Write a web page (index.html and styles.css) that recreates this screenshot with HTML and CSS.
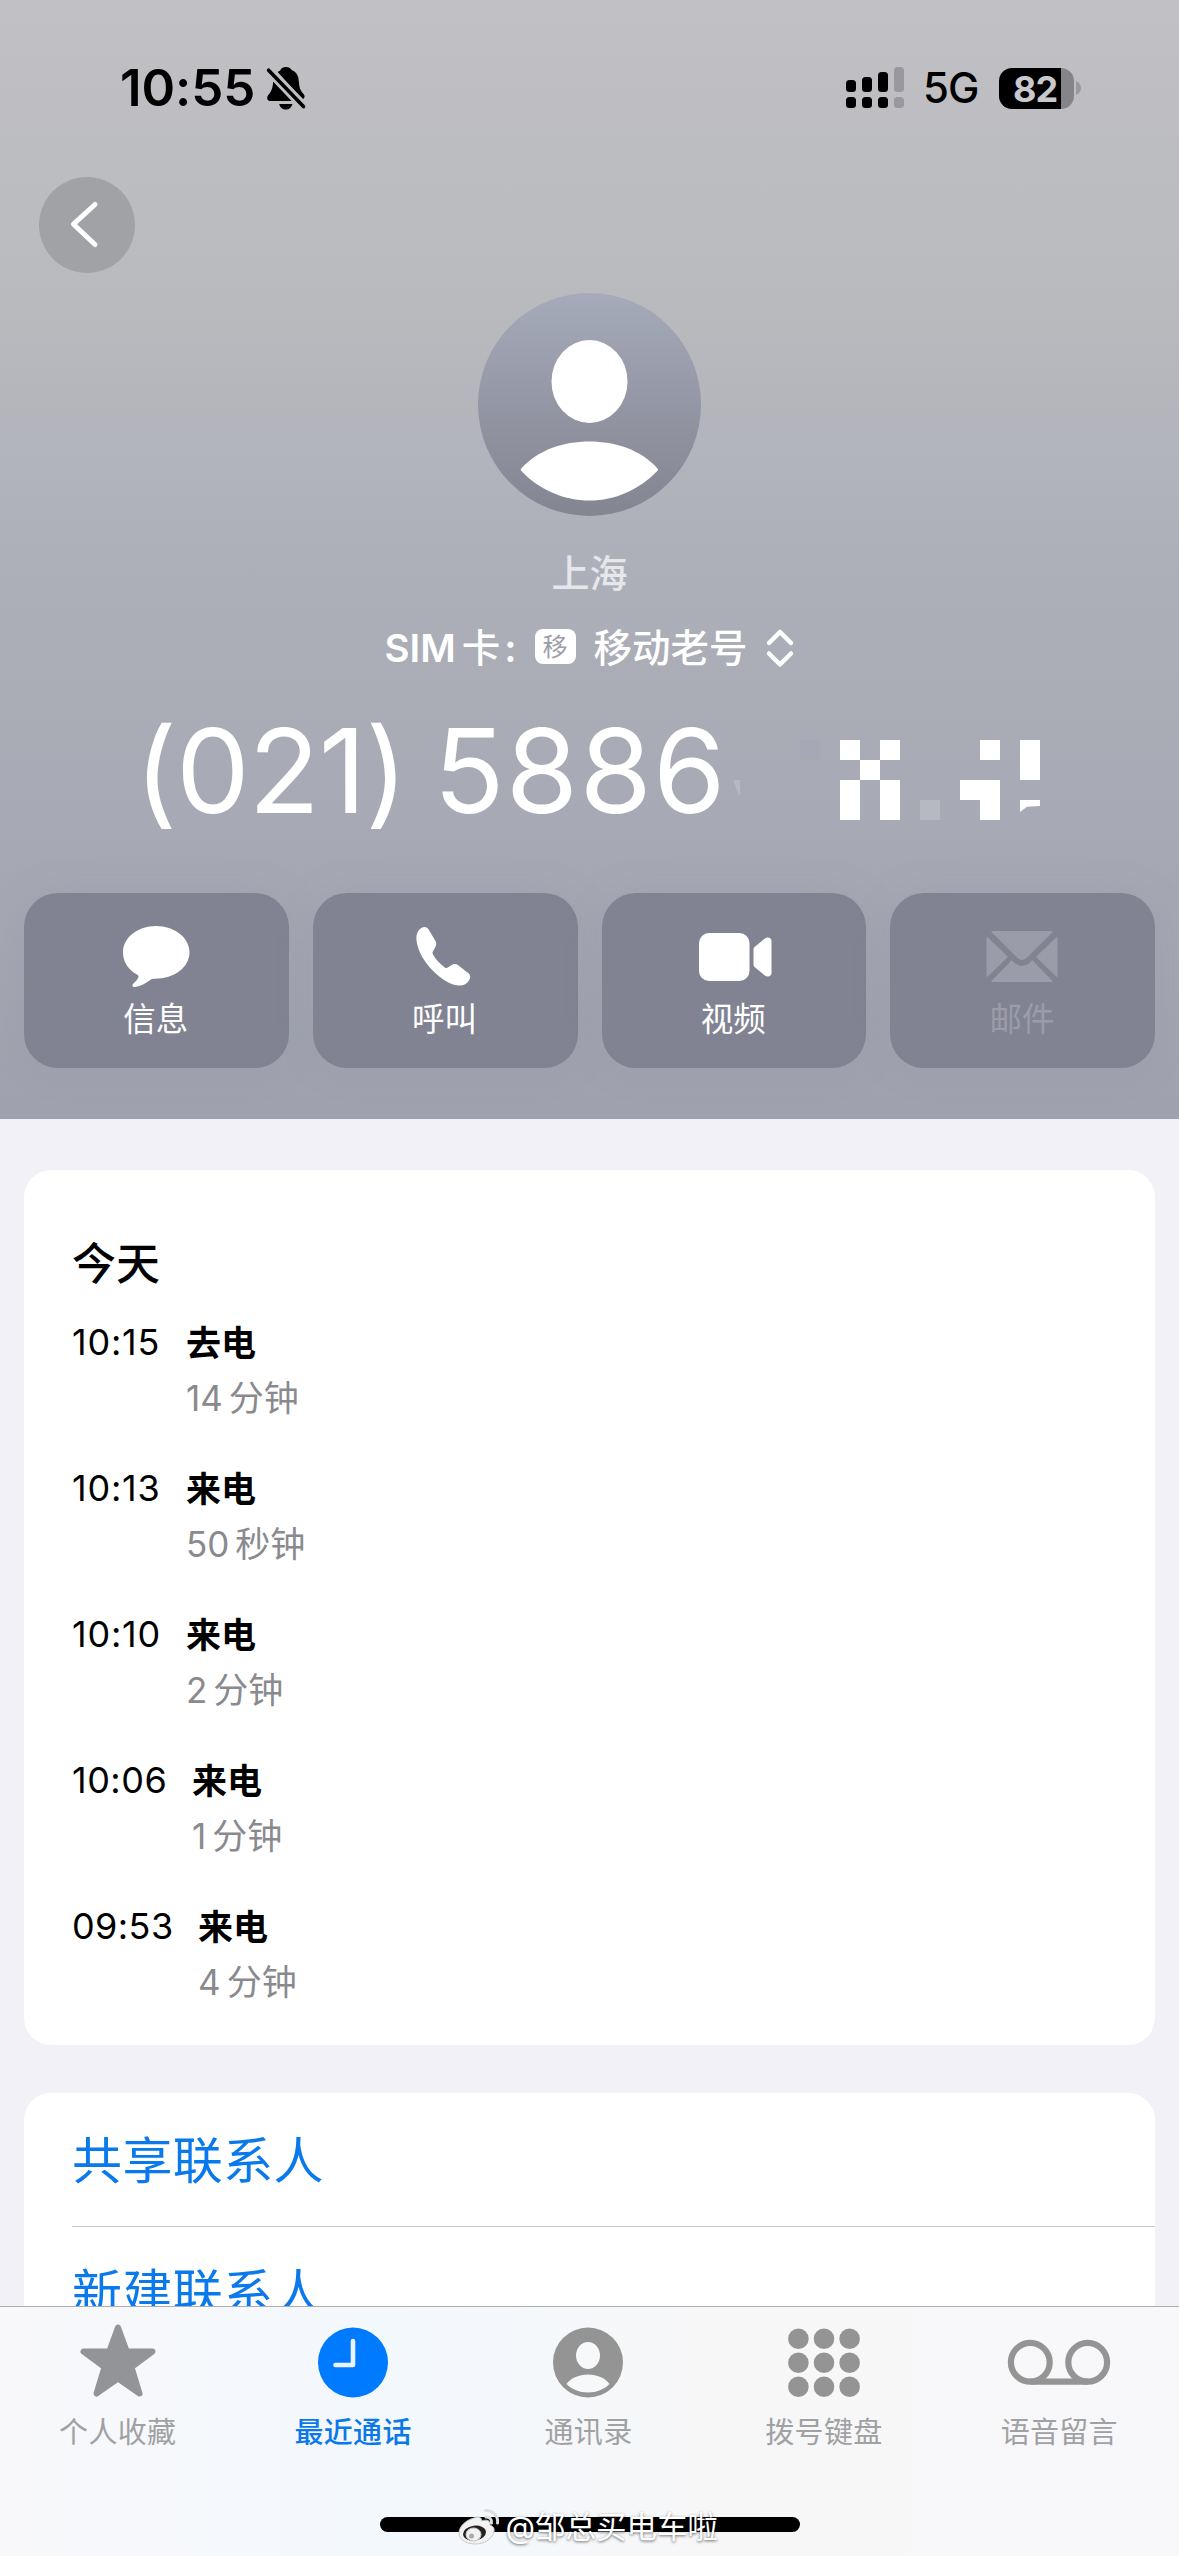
FILE: index.html
```
<!DOCTYPE html>
<html lang="zh-CN">
<head>
<meta charset="utf-8">
<title>通话详情</title>
<link rel="stylesheet" href="styles.css">
</head>
<body>
<div class="phone">
  <header class="hero">
    <div class="status">
      <div class="status-left">
        <span class="clock">10:55</span>
        <svg class="bell" viewBox="0 0 40 44" width="40" height="44">
          <path d="M20 1c-3.300 0-5 1.600-5.800 3.400L11.600 6l24.800 27.600c1.700-1 2.600-2.600 2-4.200-.8-2.300-5-4-5.400-12.400C32.600 9 30 5.600 25.800 4.300 25 2.300 23 1 20 1z"/>
          <path d="M7.200 15.500 25.600 35H4.200C1.600 35 .6 32.400 1.600 30.200c1.200-2.600 5-4.200 5.600-14.700z"/>
          <path d="M13.200 38h13.200c-.8 3.400-3.200 5.600-6.600 5.600s-5.800-2.200-6.600-5.600z"/>
          <path class="slash-gap" d="M3 4.500 38 40.500"/>
          <path class="slash" d="M2.600 4.200 37.500 40.600"/>
        </svg>
      </div>
      <div class="status-right">
        <svg class="signal" viewBox="0 0 58 42" width="58" height="42">
          <rect x="0" y="13" width="10" height="12" rx="3.500"/><rect x="16" y="10" width="10" height="15" rx="3.500"/><rect x="32" y="5" width="10" height="20" rx="3.500"/>
          <rect x="0" y="30" width="10" height="11" rx="3.500"/><rect x="16" y="30" width="10" height="11" rx="3.500"/><rect x="32" y="30" width="10" height="11" rx="3.500"/>
          <g class="dim"><rect x="48" y="0" width="10" height="25" rx="3.500"/><rect x="48" y="30" width="10" height="11" rx="3.500"/></g>
        </svg>
        <span class="network">5G</span>
        <div class="battery"><span class="level">82</span></div>
        <svg class="nub" viewBox="0 0 5 14" width="5" height="14"><path d="M0 0c3 1.500 5 4 5 7s-2 5.500-5 7z"/></svg>
      </div>
    </div>
    <div class="nav">
      <div class="back"><svg viewBox="0 0 96 96" width="96" height="96"><path d="M56 27.500 34.500 47.200 56 67.500"/></svg></div>
    </div>
    <svg class="avatar" viewBox="0 0 223 223" width="223" height="223">
      <defs><linearGradient id="av" x1="0" y1="0" x2="0" y2="1"><stop offset="0" stop-color="#a5abba"/><stop offset=".6" stop-color="#9092a0"/><stop offset="1" stop-color="#838691"/></linearGradient></defs>
      <circle cx="111.500" cy="111.500" r="111.500" fill="url(#av)"/>
      <ellipse cx="111.500" cy="88.500" rx="38" ry="41.500" fill="#fff"/>
      <path d="M43 177.500c-.5-.6-.4-1.200 0-1.800C60 157 85 148.500 111.500 148.500S163 157 179.700 175.700c.5.600.5 1.200 0 1.800C161 197 137 207.500 111.500 207.500S61 197 43 177.500z" fill="#fff"/>
    </svg>
    <div class="place">上海</div>
    <div class="sim">
      <span class="sim-label"><span>SIM</span><span>卡</span><span class="colon">:</span></span><span class="sim-badge">移</span><span class="sim-name">移动老号</span>
      <svg class="picker" viewBox="0 0 28 40" width="28" height="40"><path d="M3 15 14 4l11 11M3 25.500l11 11 11-11"/></svg>
    </div>
    <div class="number">
      <span class="area">(021)</span><span class="digits">5886</span>
      <svg class="mosaic" viewBox="0 0 310 84" width="310" height="84">
        <path class="faint" d="M4 44h6v16c-3-5-5-9-6-16z"/>
        <path class="ghost" d="M70 4h20v20H70z"/>
        <path class="faint" d="M190 64h20v20h-20z"/>
        <path d="M110 4h20v20h-20zM150 4h20v20h-20zM130 24h20v20h-20zM110 44h20v40h-20zM150 44h20v40h-20zM250 4h20v20h-20zM230 44h40v40h-20V64h-20zM290 4h20v40h-20zM290 64h20v6l-13 .7-7 5.300z"/>
      </svg>
    </div>
    <div class="actions">
      <div class="action">
        <svg viewBox="0 0 72 62" width="72" height="62"><path d="M36 1C17.600 1 3 12.800 3 27.300c0 10 5.500 17.600 14 22.300 1.900 1 2 2.200.9 3.900-1.200 1.900-2.900 3.600-4.500 5.100-2 1.900-1 3.900 2.100 3.400 5.200-.8 10.300-3.900 14-6.600 1.800-1.300 3.300-1.600 5.400-1.600C54.700 53.800 69.500 42 69.500 27.300S54.500 1 36 1z"/></svg>
        <span>信息</span>
      </div>
      <div class="action">
        <svg viewBox="0 0 72 62" width="72" height="62"><path d="M11.500 6C14.300 3.500 17.700 3 20 6.300l6.700 11.200c1.500 2.500 1.300 4.600-.2 7.200l-1.900 3.400c-.8 1.400-.8 2.100 0 3.600 3 5 7.200 9.400 11.700 12.700 1.200.8 2.100.7 3.300-.1l3.200-2.100c2.600-1.800 4.600-1.700 6.900 0l10.200 8c2.400 1.800 2.400 4.500.6 7.300-2.400 3.700-5.900 5.500-10.700 5-8.600-.8-17.700-6.700-25.900-15.200S9.500 28.300 8.200 18.800C7.500 13.500 8.200 9 11.500 6z" transform="translate(-.5 -2)"/></svg>
        <span>呼叫</span>
      </div>
      <div class="action">
        <svg viewBox="-2 0 72 62" width="72" height="62"><rect x="0" y="8" width="50.500" height="48" rx="10"/><path d="M54.500 24.500c0-1 .3-1.700 1-2.400l10-8.300c3-2.500 7-1.200 7 2.200v32c0 3.400-4 4.700-7 2.200l-10-8.300c-.7-.7-1-1.400-1-2.400z"/></svg>
        <span>视频</span>
      </div>
      <div class="action disabled">
        <svg viewBox="0 0 72 62" width="72" height="62"><path d="M5 6.500C6.200 6 7.500 6 9 6h54c1.500 0 2.800 0 4 .5L41.500 32c-4 4-7 4-11 0zM1 11.800l21 20L1 52.300C.6 51 .5 50 .5 48.500v-33c0-1.500.1-2.500.5-3.700zM71 11.800l-21 20 21 20.500c.4-1.300.5-2.300.5-3.800v-33c0-1.500-.1-2.500-.5-3.700zM5 56.500l20.700-21.200 2.300 2.200c5 4.300 11 4.300 16 0l2.300-2.200L67 56.500c-1.200.4-2.500.5-4 .5H9c-1.500 0-2.800-.1-4-.5z"/></svg>
        <span>邮件</span>
      </div>
    </div>
  </header>
  <main class="content">
    <section class="card history">
      <h2>今天</h2>
      <div class="call"><span class="time t-a">10:15</span><div><b>去电</b><p>14<i></i>分钟</p></div></div>
      <div class="call"><span class="time t-a">10:13</span><div><b>来电</b><p>50<i></i>秒钟</p></div></div>
      <div class="call"><span class="time t-a">10:10</span><div><b>来电</b><p>2<i></i>分钟</p></div></div>
      <div class="call"><span class="time t-b">10:06</span><div><b>来电</b><p>1<i></i>分钟</p></div></div>
      <div class="call"><span class="time t-c">09:53</span><div><b>来电</b><p>4<i></i>分钟</p></div></div>
    </section>
    <section class="card links">
      <div class="link">共享联系人</div>
      <div class="link">新建联系人</div>
    </section>
  </main>
  <nav class="tabs">
    <div class="tab-row">
      <div class="tab">
        <svg viewBox="0 0 80 76" width="80" height="76"><path d="M40 5.500 48.800 29.500H74.500L53.500 45 61.500 71.500 40 56.500 18.500 71.500 26.500 45 5.500 29.500H31.200z" stroke="#929497" stroke-width="6" stroke-linejoin="round" fill="#929497"/></svg>
        <span>个人收藏</span>
      </div>
      <div class="tab active">
        <svg viewBox="0 0 80 76" width="80" height="76"><circle cx="40" cy="40.500" r="35"/><path d="M40 19v24H22.500" fill="none" stroke="#e9f4ff" stroke-width="4.600" stroke-linecap="round" stroke-linejoin="round"/></svg>
        <span>最近通话</span>
      </div>
      <div class="tab">
        <svg viewBox="0 0 80 76" width="80" height="76"><circle cx="40" cy="40.500" r="35"/><ellipse cx="40" cy="33.500" rx="12" ry="13.500" fill="#f7f8f9"/><path d="M18.500 62C23 56 31 52.500 40 52.500S57 56 61.500 62C56 67.500 48.500 70.500 40 70.500S24 67.500 18.500 62z" fill="#f7f8f9"/></svg>
        <span>通讯录</span>
      </div>
      <div class="tab">
        <svg viewBox="0 0 80 76" width="80" height="76"><g id="r"><circle cx="14.400" cy="16.700" r="10.300"/><circle cx="40" cy="16.700" r="10.300"/><circle cx="65.600" cy="16.700" r="10.300"/></g><use href="#r" y="24"/><use href="#r" y="48"/></svg>
        <span>拨号键盘</span>
      </div>
      <div class="tab">
        <svg viewBox="0 0 104 76" width="104" height="76"><g fill="none" stroke="#949494" stroke-width="6.200"><circle cx="23.300" cy="40.300" r="19.400"/><circle cx="80.700" cy="40.300" r="19.400"/><path d="M23.300 59.700h57.400"/></g></svg>
        <span>语音留言</span>
      </div>
    </div>
    <div class="home-indicator">
      <div class="watermark">
        <svg viewBox="0 0 44 38" width="44" height="38">
          <path class="wb" d="M17 10c4-2 8-1 7.500 3 5-2 9.500-.5 8.500 4 4 1.500 5 4.500 3.500 8C34 31.500 27 36 18.500 36 9 36 2 31.500 2 25S9 12 17 10z"/>
          <ellipse class="wk" cx="17.500" cy="25" rx="11.500" ry="7.500" transform="rotate(-8 18 25)"/>
          <ellipse class="wb" cx="16.500" cy="26.500" rx="7.500" ry="6.500"/>
          <circle class="wg" cx="14.500" cy="28" r="2.500"/>
          <path class="wl" d="M28.500 2.500c7.500-.5 13 5.500 12 12.500M29 9c4 0 6 2.500 5.500 6"/>
        </svg>
        <span>@邹总买电车啦</span>
      </div>
    </div>
  </nav>
</div>
</body>
</html>
```
FILE: styles.css
```
* { box-sizing: border-box; margin: 0; padding: 0; }
body {
  width: 1179px;
  height: 2556px;
  overflow: hidden;
  font-family: Inter, "Noto Sans CJK SC", sans-serif;
  background: #f2f1f7;
}
svg { display: block; flex: none; overflow: visible; }
.phone { display: flex; flex-direction: column; height: 2556px; }

.hero {
  flex: none;
  height: 1119px;
  display: flex;
  flex-direction: column;
  align-items: center;
  color: #fff;
  background: linear-gradient(#c1c0c4 0, #bcbdc1 180px, #b8b9bd 330px, #b1b3bb 480px, #abadb7 640px, #a7a9b4 820px, #9fa1ae 1119px);
}
.status {
  width: 100%;
  height: 177px;
  padding: 67px 98px 0 120px;
  display: flex;
  justify-content: space-between;
  align-items: flex-start;
  color: #000;
}
.status-left, .status-right { display: flex; height: 42px; align-items: center; }
.clock { width: 146px; font-size: 51px; line-height: 44px; font-weight: 600; letter-spacing: -0.1px; white-space: nowrap; }
.bell .slash-gap { stroke: #bfbfc3; stroke-width: 9; }
.bell .slash { stroke: #000; stroke-width: 3.600; stroke-linecap: round; }
.signal { margin-right: 19px; }
.signal .dim { fill: #98999e; }
.network { width: 76px; font-size: 42px; line-height: 46px; font-weight: 500; letter-spacing: -1px; }
.battery {
  width: 75px; height: 41px;
  border-radius: 13px;
  background: linear-gradient(90deg, #000 62px, #858589 62px);
  display: flex;
}
.level { padding-left: 14px; font-size: 36px; line-height: 42px; font-weight: 700; color: #c9c9cd; letter-spacing: -1px; }
.nub { margin-left: 2px; fill: #98999d; }

.nav { width: 100%; height: 116px; padding-left: 39px; }
.back { width: 96px; height: 96px; border-radius: 50%; background: #a1a2a5; }
.back path { fill: none; stroke: #fff; stroke-width: 5; stroke-linecap: round; stroke-linejoin: round; }

.place { margin-top: 36px; height: 42px; font-size: 38px; line-height: 42px; font-weight: 500; color: #e6e7eb; }
.sim { margin-top: 29px; height: 50px; width: 410px; display: flex; align-items: center; font-size: 38.5px; line-height: 50px; font-weight: 600; }
.sim-label { display: flex; width: 150px; }
.sim-label span + span { margin-left: 6px; font-weight: 500; }
.sim-label .colon { margin-left: 4px; font-weight: 600; }
.sim-badge { width: 41px; height: 35px; margin-top: -3px; border-radius: 8px; background: #fff; color: #9b9da9; font-size: 25px; line-height: 36px; font-weight: 400; text-align: center; }
.sim-name { margin-left: 18px; width: 172px; font-weight: 500; white-space: nowrap; }
.picker path { fill: none; stroke: #fff; stroke-width: 4.500; stroke-linecap: round; stroke-linejoin: round; }

.number { margin-top: 38px; height: 120px; width: 910px; display: flex; align-items: center; font-size: 117px; line-height: 120px; white-space: nowrap; font-feature-settings: "calt" 0; }
.area { width: 299px; letter-spacing: -1.2px; }
.digits { width: 296px; letter-spacing: 1.2px; }
.mosaic { fill: #fff; margin-top: 14px; }
.mosaic .faint { fill: #b6b8c2; }
.mosaic .ghost { fill: #a6a9b5; }

.actions { margin-top: auto; margin-bottom: 51px; width: 1131px; display: grid; grid-template-columns: repeat(4, 1fr); gap: 24px; }
.action {
  height: 175px;
  padding: 32px 1px 0 0;
  border-radius: 34px;
  display: flex;
  flex-direction: column;
  align-items: center;
  gap: 13px;
  background: #818392;
  fill: #fff;
  box-shadow: 0 0 40px rgba(125, 128, 145, .12);
  font-size: 32.5px;
  line-height: 40px;
}
.disabled { fill: #9a9ca9; color: #9a9ca9; }

.content { flex: 1; min-height: 0; overflow: hidden; padding: 51px 24px 0; display: flex; flex-direction: column; gap: 48px; }
.card { flex: none; border-radius: 27px; background: #fff; }
.history { height: 875px; padding: 66px 48px 0; }
h2 { height: 80px; font-size: 44px; line-height: 56px; font-weight: 500; }
.call { height: 146px; display: flex; font-size: 36px; line-height: 52px; }
.time { flex: none; }
.t-a { width: 114px; letter-spacing: .8px; }
.t-b { width: 120px; letter-spacing: .5px; }
.t-c { width: 126px; letter-spacing: .4px; }
.call b { display: block; height: 55px; font-size: 35px; line-height: 54px; font-weight: 700; }
.call p { display: flex; color: #8a8a8e; font-size: 35px; line-height: 54px; }
.call i { width: 6px; }
.link { height: 133px; margin-left: 48px; font-size: 50px; line-height: 137px; letter-spacing: .4px; color: #0a79ec; }
.link + .link { border-top: 1px solid #c6c6c8; line-height: 132px; }

.tabs { flex: none; height: 250px; border-top: 1px solid #adadb0; background: linear-gradient(90deg, #f8f8fa, #f3f8fd 33%, #f7f7f8 60%, #f8f8fa); display: flex; flex-direction: column; align-items: center; }
.tab-row { width: 100%; height: 210px; padding: 15px 2px 0 0; display: grid; grid-template-columns: repeat(5, 1fr); }
.tab { display: flex; flex-direction: column; align-items: center; gap: 15px; font-size: 29px; line-height: 40px; letter-spacing: .3px; color: #a0a1a3; fill: #949494; }
.active { color: #0a78ea; fill: #007aff; font-weight: 500; }
.home-indicator { width: 420px; height: 15px; border-radius: 8px; background: #000; position: relative; }
.watermark { position: absolute; left: 77px; top: -10px; display: flex; align-items: center; gap: 5px; color: #fff; font-size: 30.500px; line-height: 40px; white-space: nowrap; text-shadow: 0 1px 3px rgba(0, 0, 0, .6); }
.wb { fill: #f2f2f2; stroke: #c9c9c9; stroke-width: 1; }
.wk { fill: #222; }
.wg { fill: #aaa; }
.wl { fill: none; stroke: #dedede; stroke-width: 3; stroke-linecap: round; }
```
